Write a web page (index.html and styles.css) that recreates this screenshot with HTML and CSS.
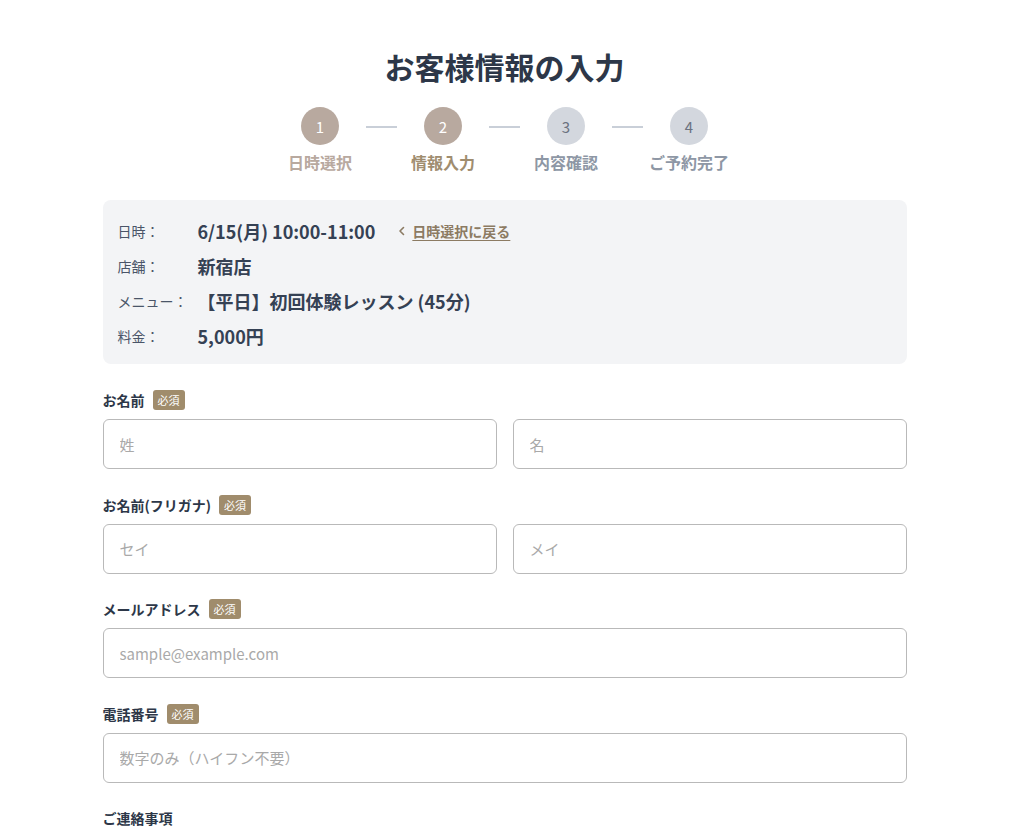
FILE: index.html
```html
<!DOCTYPE html>
<html lang="ja">
<head>
<meta charset="utf-8">
<title>お客様情報の入力</title>
<link rel="stylesheet" href="styles.css">
</head>
<body>
<main class="page">
  <h1 class="title">お客様情報の入力</h1>

  <ol class="steps">
    <li class="step step--done">
      <span class="step__circle">1</span>
      <span class="step__label">日時選択</span>
    </li>
    <li class="step__line" aria-hidden="true"></li>
    <li class="step step--current">
      <span class="step__circle">2</span>
      <span class="step__label">情報入力</span>
    </li>
    <li class="step__line" aria-hidden="true"></li>
    <li class="step">
      <span class="step__circle">3</span>
      <span class="step__label">内容確認</span>
    </li>
    <li class="step__line" aria-hidden="true"></li>
    <li class="step">
      <span class="step__circle">4</span>
      <span class="step__label">ご予約完了</span>
    </li>
  </ol>

  <section class="summary">
    <div class="summary__row">
      <span class="summary__label">日時：</span>
      <span class="summary__value">6/15(月) 10:00-11:00</span>
      <a class="summary__back" href="#">
        <svg class="summary__chev" width="8" height="10" viewBox="0 0 8 10" aria-hidden="true"><path d="M5.5 1.5 2 5l3.5 3.5" fill="none" stroke="currentColor" stroke-width="1.6" stroke-linecap="round" stroke-linejoin="round"/></svg>
        <span class="summary__backtext">日時選択に戻る</span>
      </a>
    </div>
    <div class="summary__row">
      <span class="summary__label">店舗：</span>
      <span class="summary__value">新宿店</span>
    </div>
    <div class="summary__row">
      <span class="summary__label">メニュー：</span>
      <span class="summary__value">【平日】初回体験レッスン (45分)</span>
    </div>
    <div class="summary__row">
      <span class="summary__label">料金：</span>
      <span class="summary__value">5,000円</span>
    </div>
  </section>

  <form class="form">
    <div class="field">
      <div class="field__label">お名前<span class="badge">必須</span></div>
      <div class="field__pair">
        <input class="input" type="text" placeholder="姓">
        <input class="input" type="text" placeholder="名">
      </div>
    </div>
    <div class="field">
      <div class="field__label">お名前(フリガナ)<span class="badge">必須</span></div>
      <div class="field__pair">
        <input class="input" type="text" placeholder="セイ">
        <input class="input" type="text" placeholder="メイ">
      </div>
    </div>
    <div class="field">
      <div class="field__label">メールアドレス<span class="badge">必須</span></div>
      <input class="input" type="email" placeholder="sample@example.com">
    </div>
    <div class="field">
      <div class="field__label">電話番号<span class="badge">必須</span></div>
      <input class="input" type="tel" placeholder="数字のみ（ハイフン不要）">
    </div>
    <div class="field">
      <div class="field__label">ご連絡事項</div>
      <textarea class="input input--area" rows="4"></textarea>
    </div>
  </form>
</main>
</body>
</html>
```

FILE: styles.css
```css
* { box-sizing: border-box; }

html { overflow: hidden; }

body {
  margin: 0;
  padding-right: 15px;
  background: #ffffff;
  color: #2d3748;
  font-family: "Noto Sans CJK JP", "Noto Sans", sans-serif;
}

.page {
  max-width: 804px;
  margin: 0 auto;
  padding-top: 46px;
}

.title {
  margin: 0;
  text-align: center;
  font-size: 30px;
  line-height: 40px;
  font-weight: 700;
  color: #2d3748;
}

.steps {
  list-style: none;
  margin: 21px 0 0;
  padding: 0;
  display: flex;
  justify-content: center;
  align-items: flex-start;
}

.step {
  width: 64px;
  display: flex;
  flex-direction: column;
  align-items: center;
}

.step__circle {
  width: 38px;
  height: 38px;
  border-radius: 50%;
  background: #d3d7de;
  color: #6b7280;
  display: flex;
  align-items: center;
  justify-content: center;
  font-size: 15px;
  font-weight: 400;
}

.step__label {
  margin-top: 6px;
  font-size: 16px;
  line-height: 22px;
  font-weight: 700;
  color: #8e97a5;
  white-space: nowrap;
}

.step--done .step__circle,
.step--current .step__circle {
  background: #b8a99f;
  color: #ffffff;
}

.step--done .step__label { color: #b8a99f; }
.step--current .step__label { color: #a08d6f; }

.step__line {
  width: 31px;
  height: 2px;
  margin: 19px 14px 0;
  background: #c9cfd8;
}

.summary {
  margin-top: 27px;
  background: #f3f4f6;
  border-radius: 8px;
  padding: 13px 15px 11px;
}

.summary__row {
  display: flex;
  align-items: center;
  height: 35px;
}

.summary__label {
  width: 80px;
  flex: none;
  font-size: 14px;
  color: #4a5568;
}

.summary__value {
  font-size: 18px;
  font-weight: 700;
  color: #354154;
}

.summary__back {
  margin-left: 23px;
  display: inline-flex;
  align-items: center;
  gap: 6px;
  color: #8c7b63;
  font-size: 14px;
  font-weight: 700;
  text-decoration: none;
}

.summary__backtext { text-decoration: underline; text-underline-offset: 3px; }

.form {
  margin-top: 26px;
}

.field {
  margin-bottom: 25.5px;
}

.field__label {
  display: flex;
  align-items: center;
  height: 20px;
  font-size: 14px;
  font-weight: 700;
  color: #2d3748;
}

.badge {
  margin-left: 8px;
  height: 20px;
  padding: 0 5px;
  border-radius: 3px;
  background: #a08c6c;
  color: #ffffff;
  font-size: 11px;
  font-weight: 400;
  display: inline-flex;
  align-items: center;
}

.field__pair {
  display: grid;
  grid-template-columns: 1fr 1fr;
  gap: 16px;
}

.input {
  display: block;
  width: 100%;
  height: 50px;
  margin-top: 9px;
  padding: 0 16px;
  border: 1px solid #b9b9b9;
  border-radius: 6px;
  background: #ffffff;
  font-family: inherit;
  font-size: 15px;
  color: #2d3748;
}

.input::placeholder { color: #a9a9a9; }

.input--area {
  height: 120px;
  padding: 12px 16px;
  resize: vertical;
}
```
